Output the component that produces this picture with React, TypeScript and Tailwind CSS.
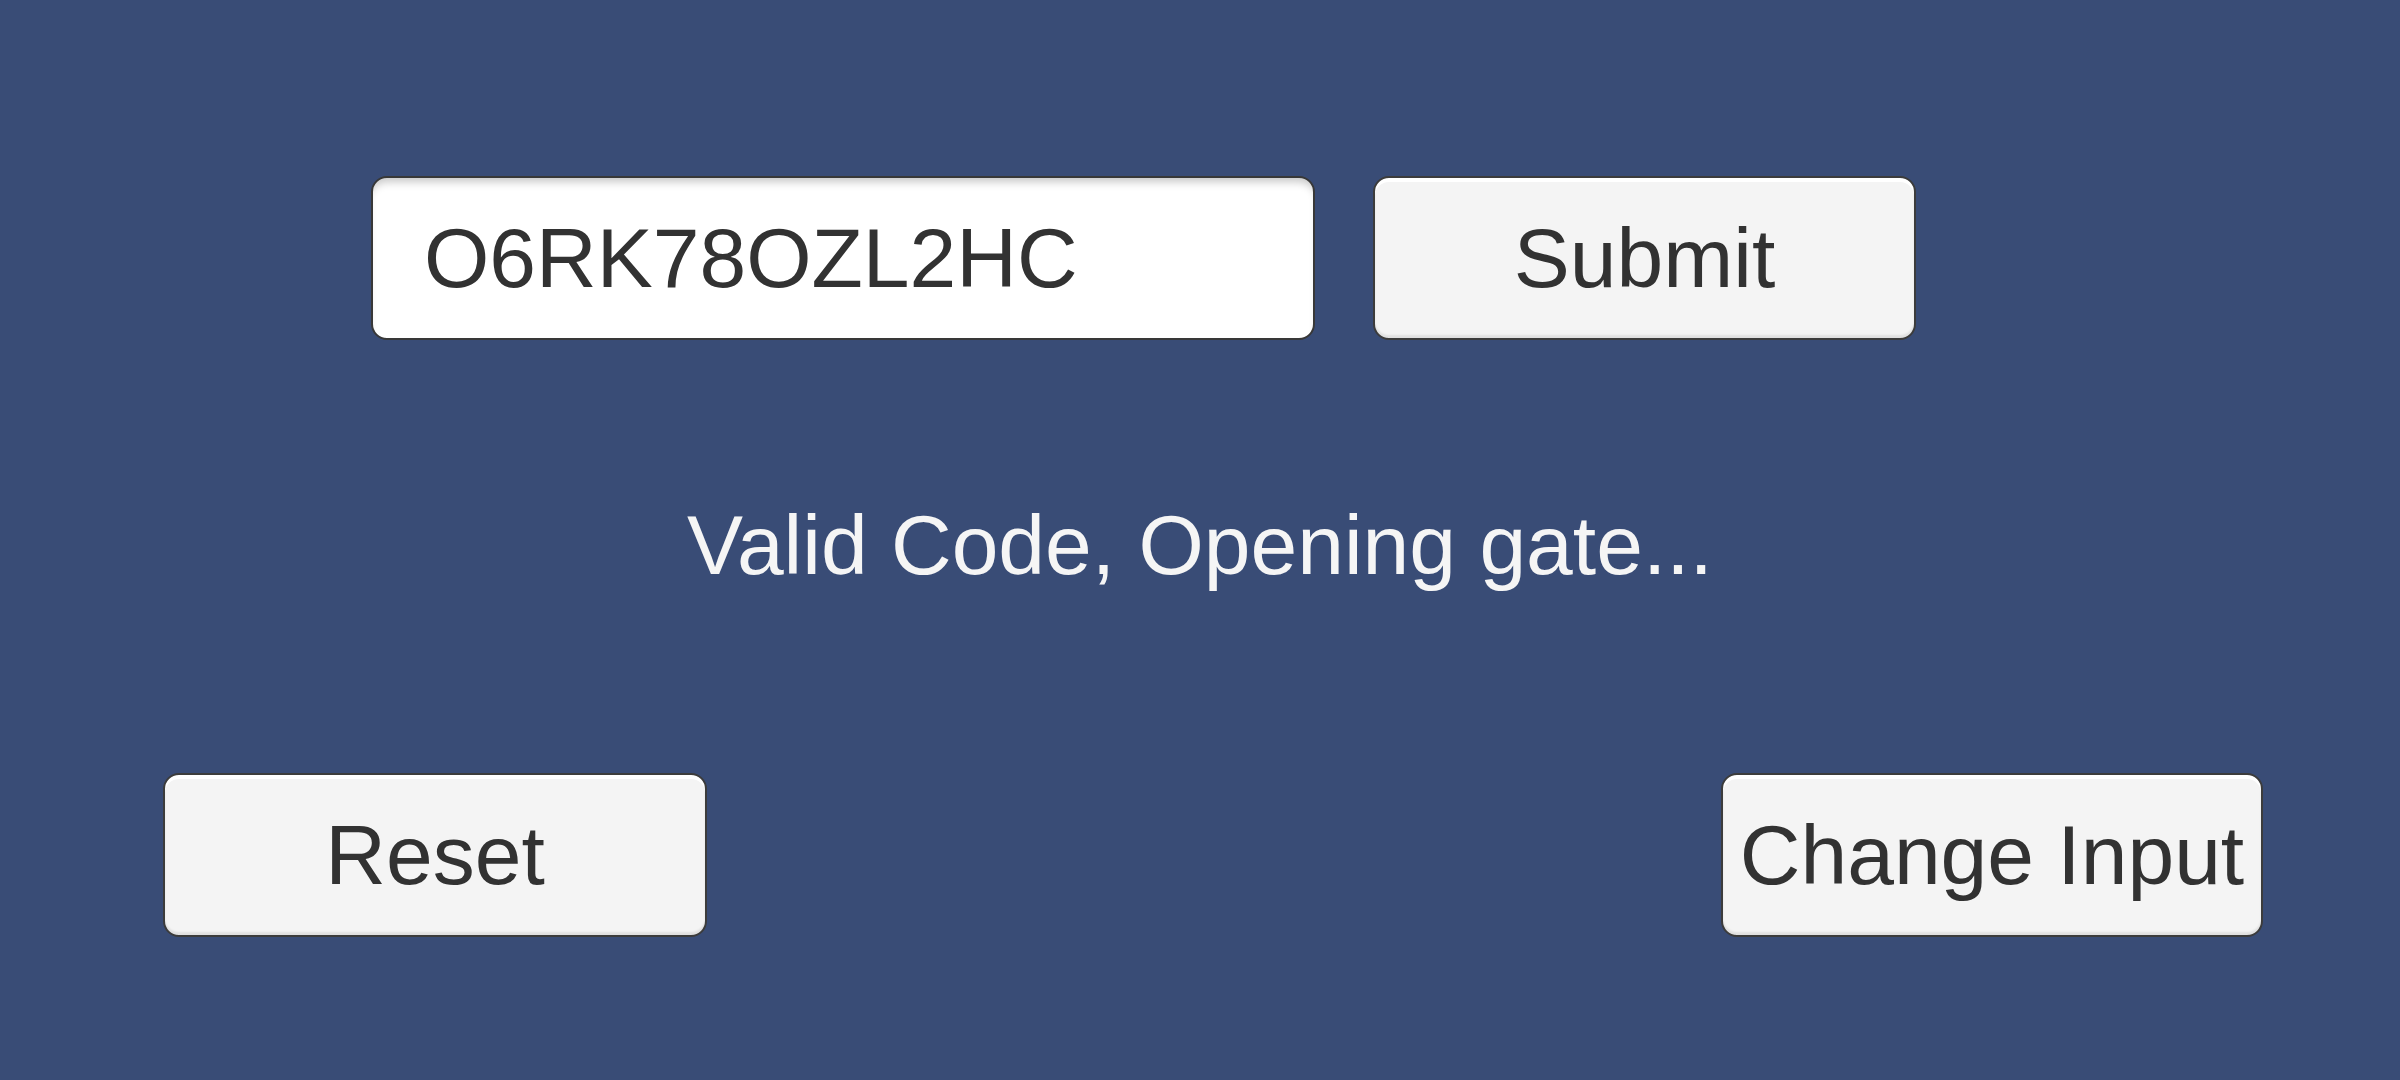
import type { ReactNode } from "react";

function UnityButton({ children, width }: { children: ReactNode; width: string }) {
  return (
    <button
      className={`flex h-[164px] ${width} items-center justify-center whitespace-nowrap rounded-[16px] border-2 border-[#3c3c3c] bg-[#f4f4f4] text-[84px] leading-none text-[#323232] shadow-[inset_0_4px_0_#ffffff,inset_0_-3px_2px_rgba(0,0,0,0.08)]`}
    >
      {children}
    </button>
  );
}

export default function App() {
  return (
    <div className="h-[1080px] w-[2400px] overflow-hidden bg-[#394c76] font-['Liberation_Sans',Arial,sans-serif]">
      <div className="flex gap-[58px] pl-[371px] pt-[176px]">
        <div className="flex h-[164px] w-[944px] items-center rounded-[16px] border-2 border-[#383838] bg-white pl-[51px] text-[84px] leading-none text-[#323232] shadow-[inset_0_9px_8px_-5px_rgba(0,0,0,0.22)]">
          O6RK78OZL2HC
        </div>
        <UnityButton width="w-[543px]">Submit</UnityButton>
      </div>

      <div className="mt-[163px] text-center text-[84px] leading-none text-[#f5f5f5]">
        Valid Code, Opening gate...
      </div>

      <div className="mt-[186px] flex justify-between pl-[163px] pr-[137px]">
        <UnityButton width="w-[544px]">Reset</UnityButton>
        <UnityButton width="w-[542px]">Change Input</UnityButton>
      </div>
    </div>
  );
}
